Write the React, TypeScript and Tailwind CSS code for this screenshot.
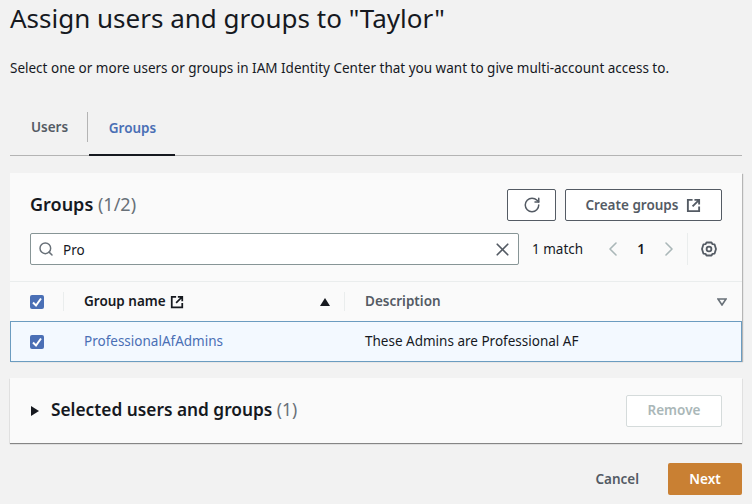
import { ChevronLeft, ChevronRight, RotateCw, Search, X } from "lucide-react";

function ExternalIcon({ className }: { className: string }) {
  return (
    <svg viewBox="0 0 16 16" className={className} fill="none" stroke="currentColor" strokeWidth="2">
      <path d="M7 2H2v12h12V9" />
      <path d="M9 2h5v5M14 2L7 9" />
    </svg>
  );
}

function Gear() {
  return (
    <svg viewBox="0 0 16 16" className="ml-[13px] h-[16px] w-[16px] text-[#545b64]" fill="none" stroke="currentColor" strokeWidth="1.8">
      <path d="M5.5 1.5h5L11.5 3.2 13.6 3.4 15 8l-1.4 4.6-2.1.2-1 1.7h-5l-1-1.7-2.1-.2L1 8l1.4-4.6 2.1-.2Z" strokeLinejoin="round" />
      <circle cx="8" cy="8" r="2.4" />
    </svg>
  );
}

function Check() {
  return (
    <span className="flex h-[14px] w-[14px] items-center justify-center rounded-[2px] bg-[#4a6fb5]">
      <svg viewBox="0 0 14 14" className="h-[14px] w-[14px]" fill="none" stroke="white" strokeWidth="2">
        <path d="M3 7.5L6 10.5L11 3.5" />
      </svg>
    </span>
  );
}

export default function App() {
  return (
    <div className="flex h-[504px] w-[752px] flex-col overflow-hidden bg-[#f2f2f2] px-[10px] font-['Noto_Sans',sans-serif] text-[#16191f]">
      <h1 className="h-[36px] text-[26px] leading-[36px]">Assign users and groups to "Taylor"</h1>
      <p className="mt-[23px] h-[18px] text-[13.5px] leading-[18px]">
        Select one or more users or groups in IAM Identity Center that you want to give multi-account access to.
      </p>

      <div className="mt-[35px] flex h-[44px] items-start border-b border-[#b4b4b4]">
        <div className="flex h-[30px] w-[78px] items-center justify-center border-r border-[#b4b4b4] pl-[2px] pt-[1px] text-[13.5px] font-semibold text-[#545b64]">
          Users
        </div>
        <div className="ml-px flex h-[44px] w-[86px] items-start justify-center border-b-2 border-[#16191f] pl-[1px] pt-[7px] text-[13.5px] font-semibold leading-[18px] text-[#4a6fb5]">
          Groups
        </div>
      </div>

      <section className="mt-[17px] h-[188px] bg-[#fafafa] shadow-[1px_1px_1px_rgba(0,0,0,0.25)]">
        <div className="flex h-[48px] items-end justify-between pl-[20px] pr-[20px]">
          <h2 className="self-center pt-[13px] text-[18px] font-semibold leading-[24px]">
            Groups <span className="font-normal text-[#687078]">(1/2)</span>
          </h2>
          <div className="flex gap-[9px]">
            <button className="flex h-[32px] w-[49px] items-center justify-center rounded-[2px] border border-[#545b64] bg-white text-[#545b64]">
              <RotateCw size={18} />
            </button>
            <button className="flex h-[32px] w-[157px] items-center justify-center gap-[8px] rounded-[2px] border border-[#545b64] bg-white text-[13.5px] font-semibold text-[#545b64]">
              Create groups
              <ExternalIcon className="h-[15px] w-[15px]" />
            </button>
          </div>
        </div>

        <div className="mt-[12px] flex h-[32px] items-center pl-[20px]">
          <div className="flex h-[32px] w-[489px] items-center rounded-[2px] border border-[#879596] bg-white pl-[7px] pr-[5px] text-[13.5px]">
            <Search size={16} strokeWidth={2.2} className="text-[#687078]" />
            <span className="ml-[9px] flex-1 pt-[2px]">Pro</span>
            <X size={21} className="text-[#545b64]" />
          </div>
          <span className="ml-[13px] w-[54px] pt-[1px] text-[13.5px]">1 match</span>
          <ChevronLeft size={24} strokeWidth={1.6} className="ml-[15px] text-[#aab7b8]" />
          <span className="ml-[10px] w-[12px] pt-[1px] text-center text-[13.5px] font-semibold">1</span>
          <ChevronRight size={24} strokeWidth={1.6} className="ml-[10px] text-[#aab7b8]" />
          <div className="ml-[6px] h-[32px] w-px bg-[#eaeded]" />
          <Gear />
        </div>

        <div className="mt-[16px] flex h-[40px] items-center border-t border-[#eaeded] pl-[20px] text-[13.5px] font-semibold">
          <Check />
          <div className="ml-[19px] h-[19px] w-px bg-[#eaeded]" />
          <span className="ml-[20px] w-[80px] whitespace-nowrap">Group name</span>
          <ExternalIcon className="ml-[6px] h-[14px] w-[14px]" />
          <svg viewBox="0 0 10 8" className="ml-[136px] h-[8px] w-[10px]">
            <path d="M5 0L10 8H0Z" fill="#16191f" />
          </svg>
          <div className="ml-[14px] h-[19px] w-px bg-[#eaeded]" />
          <span className="ml-[20px] text-[#545b64]">Description</span>
          <svg viewBox="0 0 10 8" className="ml-auto mr-[15px] h-[8px] w-[10px]" fill="none" stroke="#687078" strokeWidth="1.6">
            <path d="M1 1H9L5 7Z" />
          </svg>
        </div>

        <div className="flex h-[41px] items-center border border-[#6b9cc0] bg-[#f3f9ff] pl-[19px] text-[13.5px]">
          <Check />
          <span className="ml-[40px] w-[281px] text-[#4a6fb5]">ProfessionalAfAdmins</span>
          <span>These Admins are Professional AF</span>
        </div>
      </section>

      <section className="mt-[17px] flex h-[65px] items-center bg-[#fafafa] pl-[21px] pr-[20px] shadow-[0_1px_1px_rgba(0,0,0,0.45)]">
        <svg viewBox="0 0 8 10" className="h-[10px] w-[8px]">
          <path d="M0 0L8 5L0 10Z" fill="#16191f" />
        </svg>
        <h2 className="ml-[12px] flex-1 pb-[2px] text-[17.3px] font-semibold">
          Selected users and groups <span className="font-normal text-[#687078]">(1)</span>
        </h2>
        <button className="h-[32px] w-[96px] rounded-[2px] border border-[#d5dbdb] bg-white text-[13.5px] font-semibold text-[#aab7b8]">
          Remove
        </button>
      </section>

      <div className="mt-[20px] flex items-center justify-end">
        <span className="pt-[1px] text-[13.5px] font-semibold text-[#545b64]">Cancel</span>
        <button className="ml-[29px] h-[32px] w-[74px] rounded-[2px] bg-[#c98033] text-[13.5px] font-semibold text-white">
          Next
        </button>
      </div>
    </div>
  );
}
